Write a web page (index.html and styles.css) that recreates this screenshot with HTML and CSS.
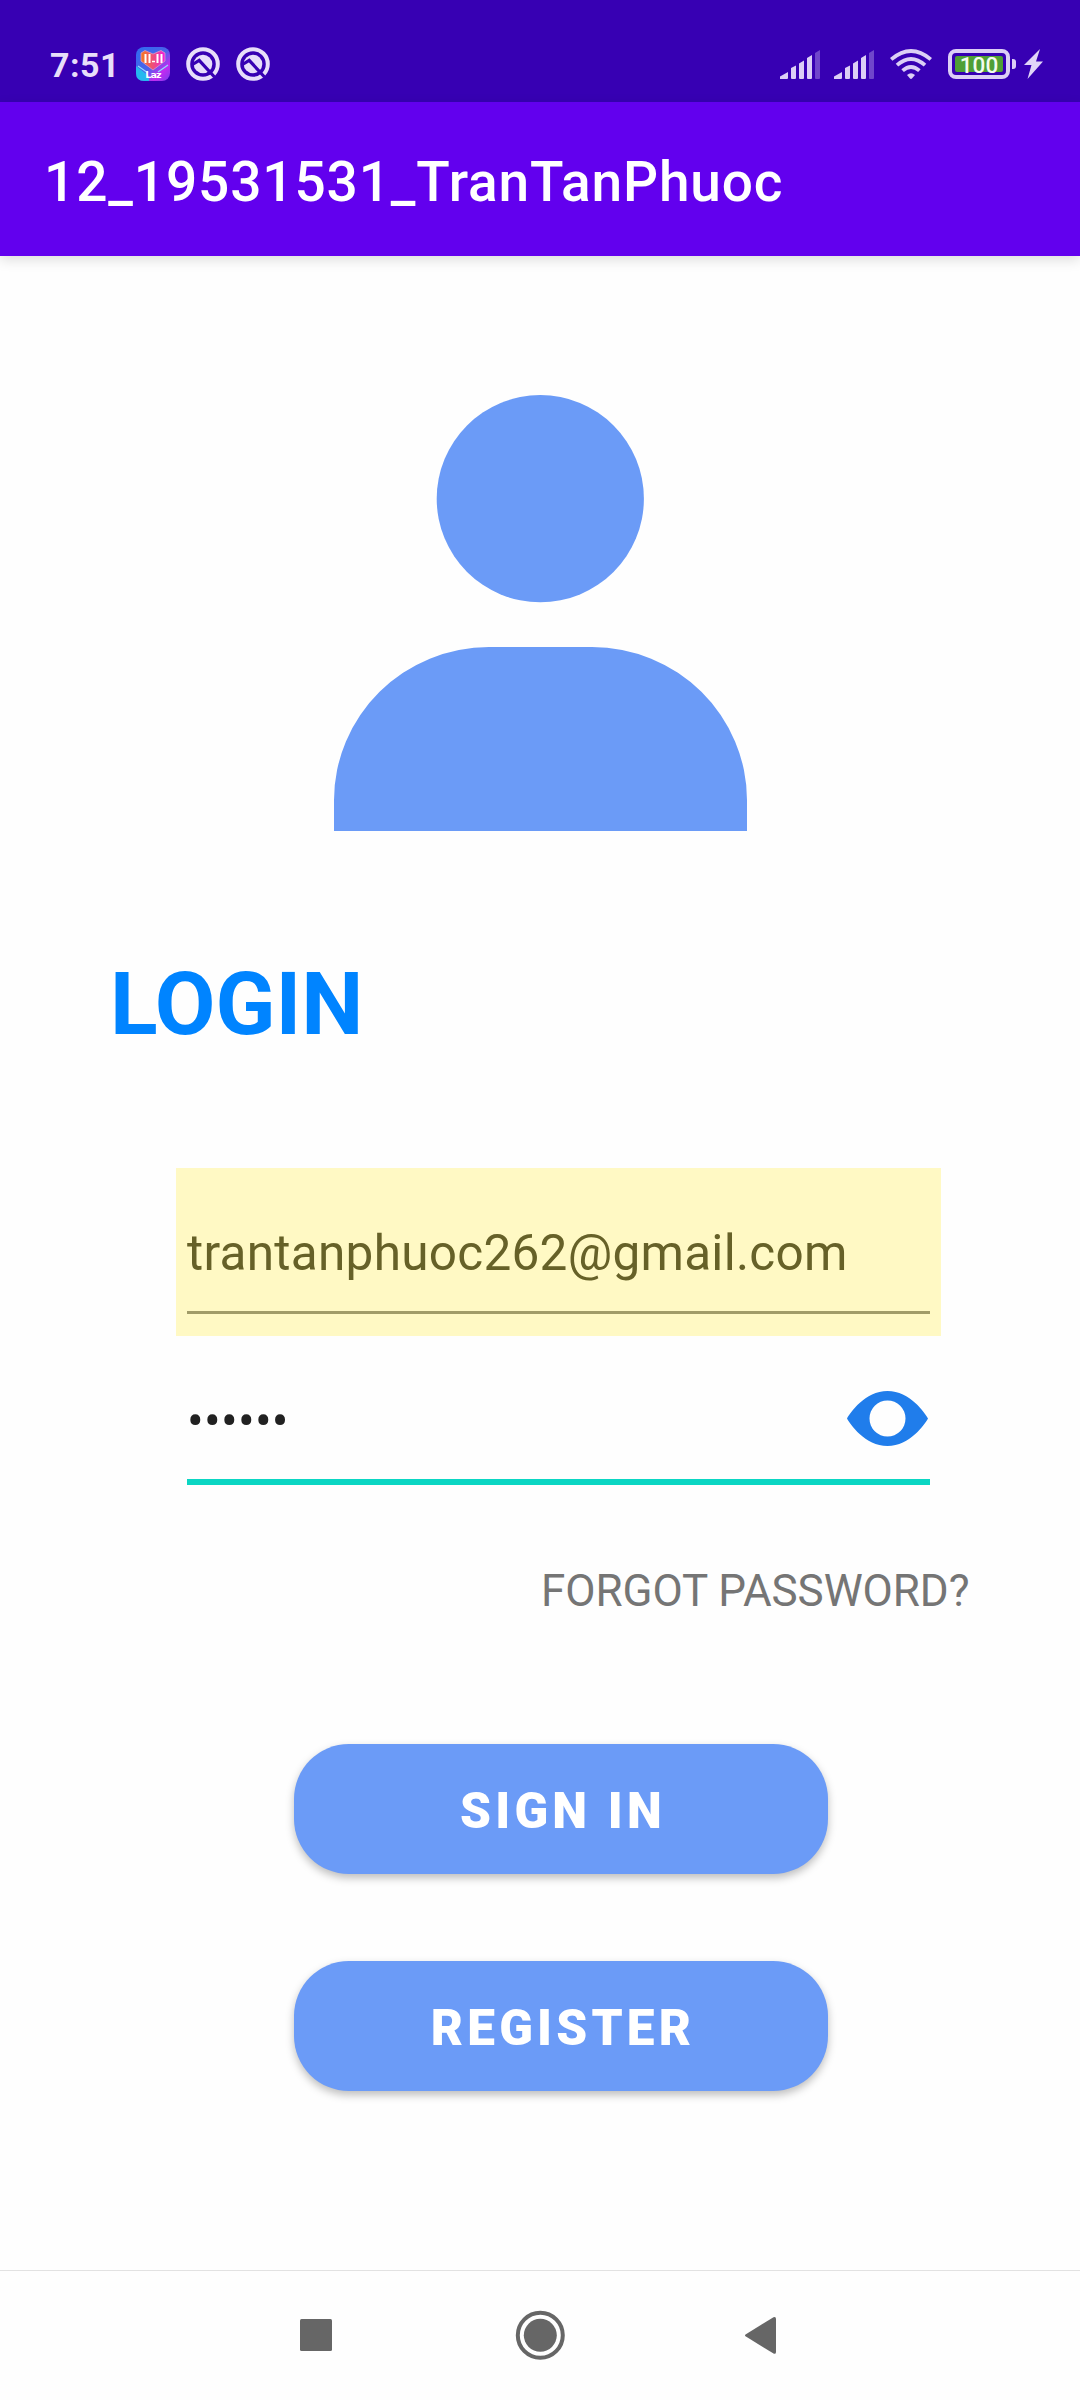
FILE: index.html
```html
<!DOCTYPE html>
<html lang="en">
<head>
<meta charset="utf-8">
<title>12_19531531_TranTanPhuoc</title>
<link rel="stylesheet" href="styles.css">
</head>
<body>
<div class="status-bar">
  <span class="clock">7:51</span>
  <div class="notifications">
    <svg class="notice" viewBox="0 0 34 34">
      <defs>
        <linearGradient id="tile" x1="0" y1="0" x2="1" y2="1">
          <stop offset="0" stop-color="#2f6cf0"/><stop offset=".5" stop-color="#4a62ea"/><stop offset=".75" stop-color="#c32af0"/><stop offset="1" stop-color="#7a3df0"/>
        </linearGradient>
        <linearGradient id="heart" x1="0" y1="0" x2="1" y2="0">
          <stop offset="0" stop-color="#f47a1c"/><stop offset=".5" stop-color="#ee4f7a"/><stop offset="1" stop-color="#f01ce0"/>
        </linearGradient>
      </defs>
      <rect width="34" height="34" rx="8" fill="url(#tile)"/>
      <path d="M0 19L13 29V34H8Q0 34 0 26Z" fill="#25b8ee"/>
      <path d="M2 19L12 26M32 18L22 25" stroke="#8fdcff" stroke-width="1.2"/>
      <path d="M17 23L5 14V6L9 3.500L17 7L25 3.500L29 6V14Z" fill="url(#heart)" stroke="#d99ac8" stroke-width=".8"/>
      <path d="M9.500 7V16M13.500 7V16M21.500 7V16M25.500 7V16" stroke="#fff" stroke-width="2"/>
      <path d="M16 14.500H19" stroke="#fff" stroke-width="1.500"/>
      <text class="laz" x="17" y="30.500" text-anchor="middle">Laz</text>
    </svg>
    <svg class="notice" viewBox="0 0 34 34"><use href="#q-icon"/></svg>
    <svg class="notice" viewBox="0 0 34 34">
      <g id="q-icon">
        <circle cx="17" cy="17" r="14.800" fill="none" stroke="#e8defa" stroke-width="4"/>
        <circle cx="17" cy="17" r="9.300" fill="#e8defa"/>
        <path d="M6.500 17.500L13.200 13.300L28.500 30" fill="none" stroke="#3700b3" stroke-width="3.200"/>
      </g>
    </svg>
  </div>
  <div class="indicators">
    <svg class="signal" viewBox="0 0 40 29">
      <path id="bars" d="M0 29V26.500L8 22V28Q8 29 7 29ZM11 18L16 15.500V28Q16 29 15 29H12Q11 29 11 28ZM19 13.500L24 10.500V28Q24 29 23 29H20Q19 29 19 28ZM27 8L32 5V28Q32 29 31 29H28Q27 29 27 28Z" fill="#dccff6"/>
      <path d="M35 3L40 0V28Q40 29 39 29H36Q35 29 35 28Z" fill="#7046cb"/>
    </svg>
    <svg class="signal" viewBox="0 0 40 29">
      <use href="#bars"/>
      <path d="M35 3L40 0V28Q40 29 39 29H36Q35 29 35 28Z" fill="#7046cb"/>
    </svg>
    <svg class="wifi" viewBox="0 0 42 30">
      <g fill="none" stroke="#dccff6" stroke-width="3.800">
        <path d="M1.200 10.400Q21 -6.400 40.800 10.400"/>
        <path d="M7 16.200Q21 3.800 35 16.200"/>
        <path d="M12.600 21.600Q21 14.200 29.400 21.600"/>
      </g>
      <path d="M17 26Q21 22.500 25 26L22.200 29.300Q21 30.500 19.800 29.300Z" fill="#dccff6"/>
    </svg>
    <div class="battery"><span class="charge">100</span></div>
    <svg class="bolt" viewBox="0 0 19 30"><path d="M16 0L0 16H7.500L3.500 30L19 12.500H12Z" fill="#e0d5f8"/></svg>
  </div>
</div>
<header class="app-bar"><h1 class="app-title">12_19531531_TranTanPhuoc</h1></header>
<main class="screen">
  <svg class="avatar" viewBox="0 0 413 437" fill="#6b9bf7">
    <circle cx="206.300" cy="104.700" r="103.600"/>
    <path d="M0 437V406A155 153.500 0 0 1 155 253H258A155 153.500 0 0 1 413 406V437Z"/>
  </svg>
  <h2 class="heading">LOGIN</h2>
  <form class="fields">
    <div class="field field-email"><span class="value">trantanphuoc262@gmail.com</span></div>
    <div class="field field-password">
      <span class="value">••••••</span>
      <svg class="eye" viewBox="0 0 81 55"><path fill-rule="evenodd" fill="#207deb" d="M0 27.500C3 22 18 0 40.500 0S78 22 81 27.500C78 33 63 55 40.500 55S3 33 0 27.500ZM40.500 9.500A18 18 0 1 0 40.500 45.500A18 18 0 1 0 40.500 9.500Z"/></svg>
    </div>
  </form>
  <div class="forgot">FORGOT PASSWORD?</div>
  <div class="actions">
    <div class="button">SIGN IN</div>
    <div class="button">REGISTER</div>
  </div>
</main>
<nav class="nav-bar">
  <svg class="nav-icon" viewBox="0 0 50 50" fill="#666"><rect x="9" y="9" width="32" height="32" rx="1.500"/></svg>
  <svg class="nav-icon" viewBox="0 0 50 50" fill="#666"><circle cx="25.300" cy="25.300" r="16.500"/><circle cx="25.300" cy="25.300" r="22.500" fill="none" stroke="#666" stroke-width="4"/></svg>
  <svg class="nav-icon" viewBox="0 0 50 50" fill="#666"><path d="M6.500 24.600L34.500 7.200Q37 6.400 37 8.900V41.900Q37 44.400 34.500 43.600L6.500 26.200Q5.500 25.400 6.500 24.600Z"/></svg>
</nav>
</body>
</html>
```
FILE: styles.css
```css
* { box-sizing: border-box; }
body {
  margin: 0;
  width: 1080px;
  height: 2400px;
  display: flex;
  flex-direction: column;
  background: #fefefe;
  font-family: Roboto, sans-serif;
}
svg { display: block; flex: none; }
.status-bar {
  height: 102px;
  padding: 26px 37px 0 50px;
  display: flex;
  align-items: center;
  background: #3700b3;
  color: #e8defa;
}
.clock {
  width: 86px;
  padding-top: 1px;
  font-size: 34px;
  font-weight: 700;
  letter-spacing: 0.5px;
  line-height: 40px;
}
.notifications { display: flex; gap: 16px; }
.notice { width: 34px; height: 34px; }
.laz { font: 700 9.5px "DejaVu Sans", sans-serif; letter-spacing: -0.8px; fill: #fff; }
.indicators { display: flex; align-items: center; margin-left: auto; }
.signal { width: 40px; height: 29px; margin-right: 14px; }
.wifi { width: 42px; height: 30px; margin: 0 16px 0 2px; }
.battery {
  position: relative;
  width: 62px;
  height: 30px;
  padding: 3px;
  border: 4px solid #dccff6;
  border-radius: 8px;
  margin-right: 14px;
}
.battery::after {
  content: "";
  position: absolute;
  left: 60px;
  top: 6px;
  width: 4px;
  height: 10px;
  border-radius: 0 3px 3px 0;
  background: #dccff6;
}
.charge {
  display: block;
  height: 16px;
  border-radius: 2px;
  background: #4f9f36;
  color: #f4fbef;
  font-size: 22.5px;
  font-weight: 500;
  line-height: 19px;
  text-align: center;
}
.bolt { width: 19px; height: 30px; }
.app-bar {
  height: 154px;
  padding: 0 44px;
  display: flex;
  align-items: center;
  background: #6200ee;
  box-shadow: 0 4px 12px rgba(0, 0, 0, 0.13);
}
.app-title {
  margin: 6px 0 0;
  font-size: 55px;
  font-weight: 500;
  line-height: 64px;
  letter-spacing: 0.87px;
  color: #fff;
}
.screen { flex: 1; display: flex; flex-direction: column; }
.avatar { width: 413px; height: 437px; margin: 138px 0 0 334px; }
.heading {
  margin: 121px 0 0 110px;
  font-size: 88px;
  font-weight: 700;
  line-height: 104px;
  color: #0084ff;
}
.fields { width: 765px; margin: 112px 0 0 176px; }
.field {
  height: 168px;
  padding: 0 13px 0 11px;
  display: flex;
  align-items: center;
  justify-content: space-between;
  font-size: 49.5px;
  line-height: 58px;
  letter-spacing: 0.27px;
  background-repeat: no-repeat;
}
.value { padding-top: 2px; }
.field-email {
  background-color: #fff9c4;
  background-image: linear-gradient(#a19c68, #a19c68);
  background-size: 743px 3px;
  background-position: 11px 143px;
  color: #666128;
}
.field-password {
  background-image: linear-gradient(#0bd6c3, #0bd6c3);
  background-size: 743px 6px;
  background-position: 11px 143px;
  color: #212121;
}
.eye { width: 81px; height: 55px; margin-bottom: 3px; }
.forgot {
  margin: 61px 0 0 541px;
  font-size: 44px;
  line-height: 52px;
  letter-spacing: -0.07px;
  color: #757575;
}
.actions {
  width: 534px;
  margin: 127px 0 0 294px;
  display: flex;
  flex-direction: column;
  gap: 87px;
}
.button {
  height: 130px;
  padding: 3px 0 0 4px;
  border-radius: 55px;
  display: flex;
  align-items: center;
  justify-content: center;
  background: #6b9bf7;
  box-shadow: 0 4px 8px rgba(0, 0, 0, 0.26);
  color: #fff;
  font-size: 49.5px;
  font-weight: 900;
  letter-spacing: 4.2px;
}
.nav-bar {
  height: 130px;
  padding: 0 291px 1px;
  display: flex;
  align-items: center;
  justify-content: space-between;
  border-top: 1px solid #e2e2e2;
}
.nav-icon { width: 50px; height: 50px; }
```
